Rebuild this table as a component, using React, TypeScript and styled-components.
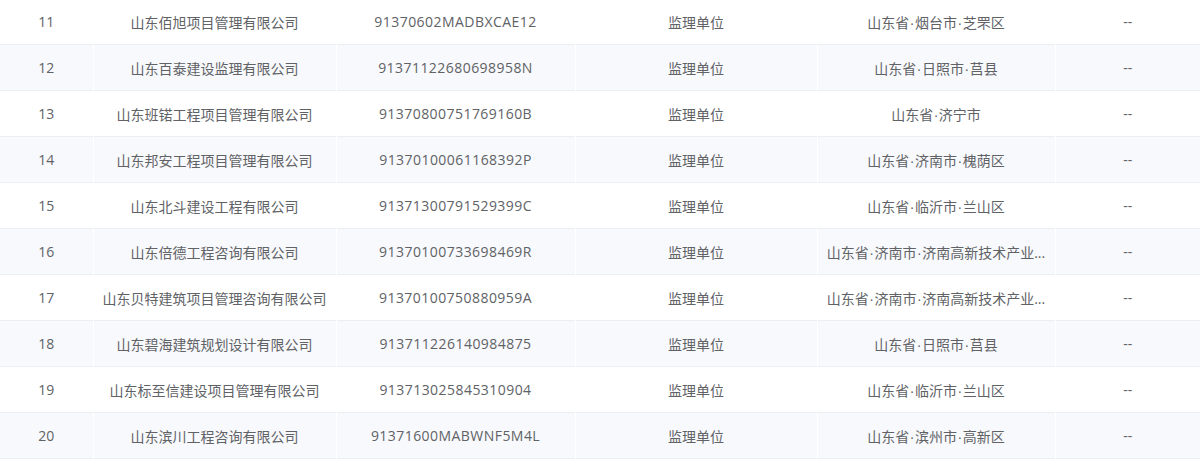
import styled, { createGlobalStyle } from "styled-components";
import { Fragment } from "react";

interface Company {
  no: number;
  name: string;
  code: string;
  type: string;
  region: string[];
  extra: string;
}

const rows: Company[] = [
  { no: 11, name: "山东佰旭项目管理有限公司", code: "91370602MADBXCAE12", type: "监理单位", region: ["山东省", "烟台市", "芝罘区"], extra: "--" },
  { no: 12, name: "山东百泰建设监理有限公司", code: "91371122680698958N", type: "监理单位", region: ["山东省", "日照市", "莒县"], extra: "--" },
  { no: 13, name: "山东班锘工程项目管理有限公司", code: "91370800751769160B", type: "监理单位", region: ["山东省", "济宁市"], extra: "--" },
  { no: 14, name: "山东邦安工程项目管理有限公司", code: "91370100061168392P", type: "监理单位", region: ["山东省", "济南市", "槐荫区"], extra: "--" },
  { no: 15, name: "山东北斗建设工程有限公司", code: "91371300791529399C", type: "监理单位", region: ["山东省", "临沂市", "兰山区"], extra: "--" },
  { no: 16, name: "山东倍德工程咨询有限公司", code: "91370100733698469R", type: "监理单位", region: ["山东省", "济南市", "济南高新技术产业..."], extra: "--" },
  { no: 17, name: "山东贝特建筑项目管理咨询有限公司", code: "91370100750880959A", type: "监理单位", region: ["山东省", "济南市", "济南高新技术产业..."], extra: "--" },
  { no: 18, name: "山东碧海建筑规划设计有限公司", code: "913711226140984875", type: "监理单位", region: ["山东省", "日照市", "莒县"], extra: "--" },
  { no: 19, name: "山东标至信建设项目管理有限公司", code: "913713025845310904", type: "监理单位", region: ["山东省", "临沂市", "兰山区"], extra: "--" },
  { no: 20, name: "山东滨川工程咨询有限公司", code: "91371600MABWNF5M4L", type: "监理单位", region: ["山东省", "滨州市", "高新区"], extra: "--" },
];

const GlobalStyle = createGlobalStyle`
  body {
    margin: 0;
    background: #fff;
    font-family: "Open Sans", "Noto Sans CJK SC", sans-serif;
  }
`;

const Wrapper = styled.div`
  width: 1200px;
  margin-top: -1px;
  overflow: hidden;
`;

const Table = styled.table`
  width: 1200px;
  border-collapse: collapse;
  table-layout: fixed;
`;

const Row = styled.tr<{ $striped: boolean }>`
  background-color: ${(p) => (p.$striped ? "#f8f9fc" : "#fff")};
  border-bottom: 1px solid #ebeef5;
`;

const Cell = styled.td<{ $spaced?: boolean }>`
  height: 45px;
  padding: 0 6px;
  text-align: center;
  font-size: 14px;
  color: #606266;
  white-space: nowrap;
  overflow: hidden;
  letter-spacing: ${(p) => (p.$spaced ? "0.45px" : "0")};
  border-right: 1px solid #fff;

  &:last-child {
    border-right: none;
  }
`;

const Dot = styled.span`
  font-family: "Liberation Sans", sans-serif;
  margin: 0 0.5px;
`;

const colWidths = [93, 243, 239, 242, 238, 145];

const App = () => {
  return (
    <>
      <GlobalStyle />
      <Wrapper>
        <Table>
          <colgroup>
            {colWidths.map((w, i) => (
              <col key={i} style={{ width: w }} />
            ))}
          </colgroup>
          <tbody>
            {rows.map((r, index) => (
              <Row key={r.no} $striped={index % 2 === 1}>
                <Cell>{r.no}</Cell>
                <Cell>{r.name}</Cell>
                <Cell $spaced>{r.code}</Cell>
                <Cell>{r.type}</Cell>
                <Cell>
                  {r.region.map((part, i) => (
                    <Fragment key={i}>
                      {i > 0 && <Dot>·</Dot>}
                      {part}
                    </Fragment>
                  ))}
                </Cell>
                <Cell>{r.extra}</Cell>
              </Row>
            ))}
          </tbody>
        </Table>
      </Wrapper>
    </>
  );
};

export default App;
